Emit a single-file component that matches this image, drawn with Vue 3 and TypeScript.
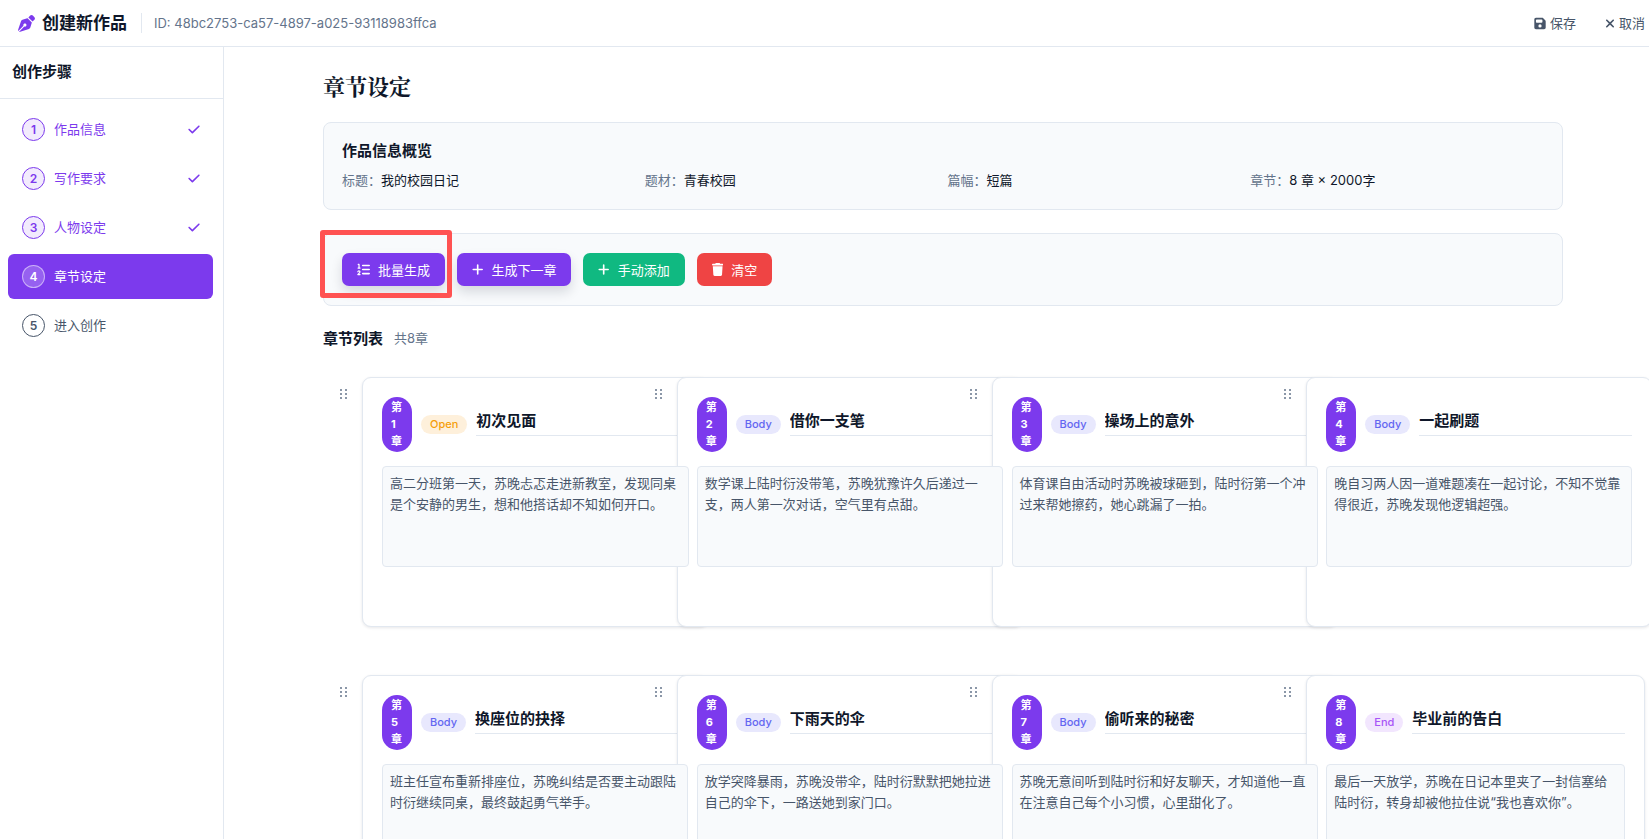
<script setup lang="ts">
import { ref } from 'vue'

interface Step {
  name: string
  state: 'done' | 'active' | 'todo'
}

interface Chapter {
  title: string
  kind: 'Open' | 'Body' | 'End'
  summary: string
}

interface Action {
  label: string
  tone: 'primary' | 'success' | 'danger'
  icon: string
  box: string
  marked?: boolean
}

const steps: Step[] = [
  { name: '作品信息', state: 'done' },
  { name: '写作要求', state: 'done' },
  { name: '人物设定', state: 'done' },
  { name: '章节设定', state: 'active' },
  { name: '进入创作', state: 'todo' },
]

const overview = [
  { label: '标题：', value: '我的校园日记' },
  { label: '题材：', value: '青春校园' },
  { label: '篇幅：', value: '短篇' },
  { label: '章节：', value: '8 章 × 2000字' },
]

const plusIcon =
  'M256 80c0-17.7-14.3-32-32-32s-32 14.3-32 32V224H48c-17.7 0-32 14.3-32 32s14.3 32 32 32H192V432c0 17.7 14.3 32 32 32s32-14.3 32-32V288H400c17.7 0 32-14.3 32-32s-14.3-32-32-32H256V80z'
const listIcon =
  'M24 56c0-13.3 10.7-24 24-24H80c13.3 0 24 10.7 24 24V176h16c13.3 0 24 10.7 24 24s-10.7 24-24 24H40c-13.3 0-24-10.7-24-24s10.7-24 24-24H56V80H48C34.7 80 24 69.3 24 56zM86.7 341.2c-6.5-7.4-18.3-6.9-24 1.2L51.5 357.9c-7.7 10.8-22.7 13.3-33.5 5.6s-13.3-22.7-5.6-33.5l11.1-15.6c23.7-33.2 72.3-35.6 99.2-4.9c21.3 24.4 20.8 60.9-1.1 84.7L86.8 432H120c13.3 0 24 10.7 24 24s-10.7 24-24 24H32c-9.5 0-18.2-5.6-22-14.4s-2.1-18.9 4.3-25.9l72-78c5.3-5.8 5.4-14.6 .3-20.5zM224 64H480c17.7 0 32 14.3 32 32s-14.3 32-32 32H224c-17.7 0-32-14.3-32-32s14.3-32 32-32zm0 160H480c17.7 0 32 14.3 32 32s-14.3 32-32 32H224c-17.7 0-32-14.3-32-32s14.3-32 32-32zm0 160H480c17.7 0 32 14.3 32 32s-14.3 32-32 32H224c-17.7 0-32-14.3-32-32s14.3-32 32-32z'
const trashIcon =
  'M135.2 17.7L128 32H32C14.3 32 0 46.3 0 64S14.3 96 32 96H416c17.7 0 32-14.3 32-32s-14.3-32-32-32H320l-7.2-14.3C307.4 6.8 296.3 0 284.2 0H163.8c-12.1 0-23.2 6.8-28.6 17.7zM416 128H32L53.2 467c1.6 25.3 22.6 45 47.9 45H346.9c25.3 0 46.3-19.7 47.9-45L416 128z'

const actions: Action[] = [
  { label: '批量生成', tone: 'primary', icon: listIcon, box: '0 0 512 512', marked: true },
  { label: '生成下一章', tone: 'primary', icon: plusIcon, box: '0 0 448 512' },
  { label: '手动添加', tone: 'success', icon: plusIcon, box: '0 0 448 512' },
  { label: '清空', tone: 'danger', icon: trashIcon, box: '0 0 448 512' },
]

const chapters = ref<Chapter[]>([
  { title: '初次见面', kind: 'Open', summary: '高二分班第一天，苏晚忐忑走进新教室，发现同桌是个安静的男生，想和他搭话却不知如何开口。' },
  { title: '借你一支笔', kind: 'Body', summary: '数学课上陆时衍没带笔，苏晚犹豫许久后递过一支，两人第一次对话，空气里有点甜。' },
  { title: '操场上的意外', kind: 'Body', summary: '体育课自由活动时苏晚被球砸到，陆时衍第一个冲过来帮她擦药，她心跳漏了一拍。' },
  { title: '一起刷题', kind: 'Body', summary: '晚自习两人因一道难题凑在一起讨论，不知不觉靠得很近，苏晚发现他逻辑超强。' },
  { title: '换座位的抉择', kind: 'Body', summary: '班主任宣布重新排座位，苏晚纠结是否要主动跟陆时衍继续同桌，最终鼓起勇气举手。' },
  { title: '下雨天的伞', kind: 'Body', summary: '放学突降暴雨，苏晚没带伞，陆时衍默默把她拉进自己的伞下，一路送她到家门口。' },
  { title: '偷听来的秘密', kind: 'Body', summary: '苏晚无意间听到陆时衍和好友聊天，才知道他一直在注意自己每个小习惯，心里甜化了。' },
  { title: '毕业前的告白', kind: 'End', summary: '最后一天放学，苏晚在日记本里夹了一封信塞给陆时衍，转身却被他拉住说“我也喜欢你”。' },
])
</script>

<template>
  <div class="app">
    <header class="topbar">
      <svg class="logo" viewBox="0 0 512 512" aria-hidden="true">
        <path
          d="M368.4 18.3L312.7 74.1 437.9 199.3l55.7-55.7c21.9-21.9 21.9-57.3 0-79.2L447.6 18.3c-21.9-21.9-57.3-21.9-79.2 0zM288 94.6l-9.2 2.8L134.7 140.6c-19.9 6-35.7 21.2-42.3 41L3.8 445.8c-3.8 11.3-1 23.9 7.3 32.4L164.7 324.7c-3-6.3-4.7-13.3-4.7-20.7c0-26.5 21.5-48 48-48s48 21.5 48 48s-21.5 48-48 48c-7.4 0-14.4-1.7-20.7-4.7L33.7 500.9c8.6 8.3 21.1 11.2 32.4 7.3l264.3-88.6c19.7-6.6 35-22.4 41-42.3l43.2-144.1 2.8-9.2L288 94.6z"
        />
      </svg>
      <h1 class="app-title">创建新作品</h1>
      <span class="work-id">ID: 48bc2753-ca57-4897-a025-93118983ffca</span>
      <div class="top-actions">
        <button type="button" class="ghost">
          <svg class="icon-save" viewBox="0 0 448 512" aria-hidden="true">
            <path
              d="M64 32C28.7 32 0 60.7 0 96V416c0 35.3 28.7 64 64 64H384c35.3 0 64-28.7 64-64V173.3c0-17-6.7-33.3-18.7-45.3L352 50.7C340 38.7 323.7 32 306.7 32H64zm0 96c0-17.7 14.3-32 32-32H288c17.7 0 32 14.3 32 32v64c0 17.7-14.3 32-32 32H96c-17.7 0-32-14.3-32-32V128zM224 288a64 64 0 1 1 0 128 64 64 0 1 1 0-128z"
            />
          </svg>
          保存
        </button>
        <button type="button" class="ghost">
          <svg class="icon-close" viewBox="0 0 384 512" aria-hidden="true">
            <path
              d="M342.6 150.6c12.5-12.5 12.5-32.8 0-45.3s-32.8-12.5-45.3 0L192 210.7 86.6 105.4c-12.5-12.5-32.8-12.5-45.3 0s-12.5 32.8 0 45.3L146.7 256 41.4 361.4c-12.5 12.5-12.5 32.8 0 45.3s32.8 12.5 45.3 0L192 301.3 297.4 406.6c12.5 12.5 32.8 12.5 45.3 0s12.5-32.8 0-45.3L237.3 256 342.6 150.6z"
            />
          </svg>
          取消
        </button>
      </div>
    </header>

    <div class="body">
      <aside class="sidebar">
        <h2 class="side-title">创作步骤</h2>
        <nav class="steps">
          <button
            v-for="(step, i) in steps"
            :key="step.name"
            type="button"
            class="step"
            :class="step.state"
            :aria-current="step.state === 'active' ? 'step' : undefined"
          >
            <span class="num">{{ i + 1 }}</span>
            <span class="step-name">{{ step.name }}</span>
            <svg v-if="step.state === 'done'" class="check" viewBox="0 0 448 512" aria-hidden="true">
              <path
                d="M438.6 105.4c12.5 12.5 12.5 32.8 0 45.3l-256 256c-12.5 12.5-32.8 12.5-45.3 0l-128-128c-12.5-12.5-12.5-32.8 0-45.3s32.8-12.5 45.3 0L160 338.7 393.4 105.4c12.5-12.5 32.8-12.5 45.3 0z"
              />
            </svg>
          </button>
        </nav>
      </aside>

      <main class="main">
        <div class="content">
          <h2 class="page-title">章节设定</h2>

          <section class="panel overview">
            <h3 class="panel-title">作品信息概览</h3>
            <dl class="facts">
              <div v-for="item in overview" :key="item.label" class="fact">
                <dt>{{ item.label }}</dt>
                <dd>{{ item.value }}</dd>
              </div>
            </dl>
          </section>

          <section class="panel toolbar">
            <div v-for="action in actions" :key="action.label" class="tool">
              <button type="button" class="btn" :class="action.tone">
                <svg :viewBox="action.box" aria-hidden="true"><path :d="action.icon" /></svg>
                {{ action.label }}
              </button>
              <span v-if="action.marked" class="marker" aria-hidden="true"></span>
            </div>
          </section>

          <div class="list-head">
            <h3 class="list-title">章节列表</h3>
            <span class="count">共{{ chapters.length }}章</span>
          </div>

          <div class="grid">
            <div v-for="(chapter, i) in chapters" :key="i" class="cell">
              <button type="button" class="grip" :aria-label="`拖动第${i + 1}章`">
                <svg viewBox="0 0 8 10" aria-hidden="true">
                  <circle cx="1" cy="1" r="1" />
                  <circle cx="6" cy="1" r="1" />
                  <circle cx="1" cy="5" r="1" />
                  <circle cx="6" cy="5" r="1" />
                  <circle cx="1" cy="9" r="1" />
                  <circle cx="6" cy="9" r="1" />
                </svg>
              </button>
              <article class="card">
                <div class="card-head">
                  <span class="badge">第{{ i + 1 }}章</span>
                  <span class="tag" :class="`tag-${chapter.kind.toLowerCase()}`">{{ chapter.kind }}</span>
                  <input v-model="chapter.title" class="name" type="text" :aria-label="`第${i + 1}章标题`" />
                </div>
                <textarea v-model="chapter.summary" class="summary" :aria-label="`第${i + 1}章概要`"></textarea>
              </article>
            </div>
          </div>
        </div>
      </main>
    </div>
  </div>
</template>

<style>
body {
  margin: 0;
  background: #fff;
}
</style>

<style scoped>
* {
  box-sizing: border-box;
}

.app {
  display: flex;
  flex-direction: column;
  height: 100vh;
  overflow: hidden;
  color: #0f172a;
  font: 13px/20px Inter, 'Noto Sans CJK SC', sans-serif;
}

h1,
h2,
h3,
dl,
dd {
  margin: 0;
}

button,
input,
textarea {
  font: inherit;
}

button {
  cursor: pointer;
}

svg {
  display: block;
  fill: currentColor;
  flex: none;
}

.topbar {
  display: flex;
  align-items: center;
  flex: none;
  height: 47px;
  padding: 0 4px 0 18px;
  border-bottom: 1px solid #e2e8f0;
}

.logo {
  width: 17px;
  height: 17px;
  color: #7c3aed;
}

.app-title {
  margin-left: 7px;
  font-size: 17px;
  font-weight: 700;
}

.work-id {
  margin-left: 14px;
  padding-left: 12px;
  border-left: 1px solid #e2e8f0;
  color: #64748b;
}

.top-actions {
  display: flex;
  gap: 29px;
  margin-left: auto;
}

.ghost {
  display: flex;
  align-items: center;
  gap: 4px;
  padding: 0;
  border: 0;
  background: none;
  color: #475569;
}

.icon-save {
  width: 12px;
  height: 13px;
}

.icon-close {
  width: 10px;
  height: 13px;
}

.body {
  display: flex;
  flex: 1;
  min-height: 0;
}

.sidebar {
  flex: none;
  width: 224px;
  border-right: 1px solid #e2e8f0;
}

.side-title {
  height: 52px;
  padding: 0 12px;
  border-bottom: 1px solid #e2e8f0;
  font-size: 15px;
  font-weight: 600;
  line-height: 50px;
}

.steps {
  display: flex;
  flex-direction: column;
  gap: 4px;
  padding: 8px 10px 8px 8px;
}

.step {
  display: flex;
  align-items: center;
  gap: 9px;
  height: 45px;
  padding: 0 13px 0 14px;
  border: 0;
  border-radius: 6px;
  background: none;
  color: #475569;
  text-align: left;
}

.num {
  width: 23px;
  height: 23px;
  border: 1px solid currentColor;
  border-radius: 50%;
  font-size: 12px;
  font-weight: 600;
  line-height: 21px;
  text-align: center;
}

.done {
  color: #7c3aed;
}

.done .num {
  background: #f2ebfd;
}

.active {
  background: #7c3aed;
  color: #fff;
}

.active .num {
  border-color: rgba(255, 255, 255, 0.5);
  background: rgba(255, 255, 255, 0.2);
}

.step-name {
  flex: 1;
  padding-bottom: 2px;
}

.check {
  width: 12px;
  height: 13px;
}

.main {
  flex: 1;
  min-width: 0;
  padding: 23px 0 23px 13px;
  overflow: hidden auto;
  scrollbar-width: none;
}

.content {
  width: 88%;
  max-width: 1240px;
  margin: 0 auto;
}

.page-title {
  margin-bottom: 20px;
  font-family: 'Noto Serif CJK SC', 'Noto Serif SC', 'Liberation Serif', serif;
  font-size: 22px;
  font-weight: 700;
  line-height: 32px;
}

.panel {
  margin-bottom: 23px;
  padding: 19px;
  padding-left: 18px;
  border: 1px solid #e2e8f0;
  border-radius: 8px;
  background: #f8fafc;
}

.overview {
  padding-top: 17px;
  padding-bottom: 19px;
}

.panel-title {
  margin-bottom: 8px;
  font-size: 15px;
  font-weight: 600;
  line-height: 22px;
}

.facts {
  display: grid;
  grid-template-columns: repeat(4, 1fr);
  gap: 10px;
}

.fact {
  display: flex;
}

.fact dt {
  color: #64748b;
}

.toolbar {
  display: flex;
  flex-wrap: wrap;
  gap: 12px;
}

.tool {
  position: relative;
}

.btn {
  display: flex;
  align-items: center;
  gap: 8px;
  height: 33px;
  padding: 0 15px;
  border: 0;
  border-radius: 7px;
  color: #fff;
}

.btn svg {
  height: 13px;
}

.primary {
  background: #7c3aed;
  box-shadow: 0 6px 12px rgba(15, 23, 42, 0.14);
}

.success {
  background: #10b981;
}

.danger {
  background: #ef4444;
}

.marker {
  position: absolute;
  z-index: 1;
  inset: -23px -7px -12px -22px;
  border: 5px solid #ff5252;
  border-radius: 3px;
  pointer-events: none;
}

.list-head {
  display: flex;
  align-items: center;
  gap: 11px;
  margin-bottom: 29px;
}

.list-title {
  font-size: 15px;
  font-weight: 600;
  line-height: 19px;
}

.count {
  color: #64748b;
  line-height: 19px;
}

.grid {
  display: grid;
  grid-template-columns: repeat(4, minmax(0, 1fr));
  gap: 48px 19px;
}

.cell {
  display: flex;
  align-items: flex-start;
}

.grip {
  flex: none;
  width: 39px;
  padding: 12px 14px 12px 17px;
  border: 0;
  background: none;
  color: #64748b;
  cursor: grab;
}

.grip svg {
  width: 8px;
  height: 10px;
}

.card {
  flex: none;
  min-height: 250px;
  padding: 19px;
  border: 1px solid #e2e8f0;
  border-radius: 9px;
  background: #fff;
  box-shadow: 0 1px 3px rgba(15, 23, 42, 0.1);
}

.card-head {
  display: flex;
  align-items: center;
  gap: 9px;
  margin-bottom: 14px;
}

.badge {
  width: 30px;
  padding: 2px 9px;
  border-radius: 15px;
  background: #7c3aed;
  color: #fff;
  font-size: 11px;
  font-weight: 700;
  line-height: 17px;
  word-break: break-all;
}

.tag {
  padding: 0 9px;
  border-radius: 10px;
  font-size: 11px;
  font-weight: 500;
  line-height: 19px;
}

.tag-open {
  background: #fef0db;
  color: #f59e0b;
}

.tag-body {
  background: #e8e8fd;
  color: #6366f1;
}

.tag-end {
  background: #f2e6fe;
  color: #a855f7;
}

.name {
  width: 213px;
  height: 27px;
  margin: 0 0 4px;
  padding: 0 0 6px;
  border: 0;
  border-bottom: 1px solid #e2e8f0;
  background: none;
  color: #0f172a;
  font-size: 15px;
  font-weight: 600;
}

/* Sits above the neighbouring card where the two overlap. */
.summary {
  position: relative;
  z-index: 1;
  display: block;
  width: 100%;
  height: 101px;
  padding: 6px 7px;
  border: 1px solid #e2e8f0;
  border-radius: 4px;
  background: #f8fafc;
  color: #475569;
  line-height: 21px;
  resize: none;
}

.name:focus,
.summary:focus {
  outline: none;
  border-color: #7c3aed;
}
</style>
